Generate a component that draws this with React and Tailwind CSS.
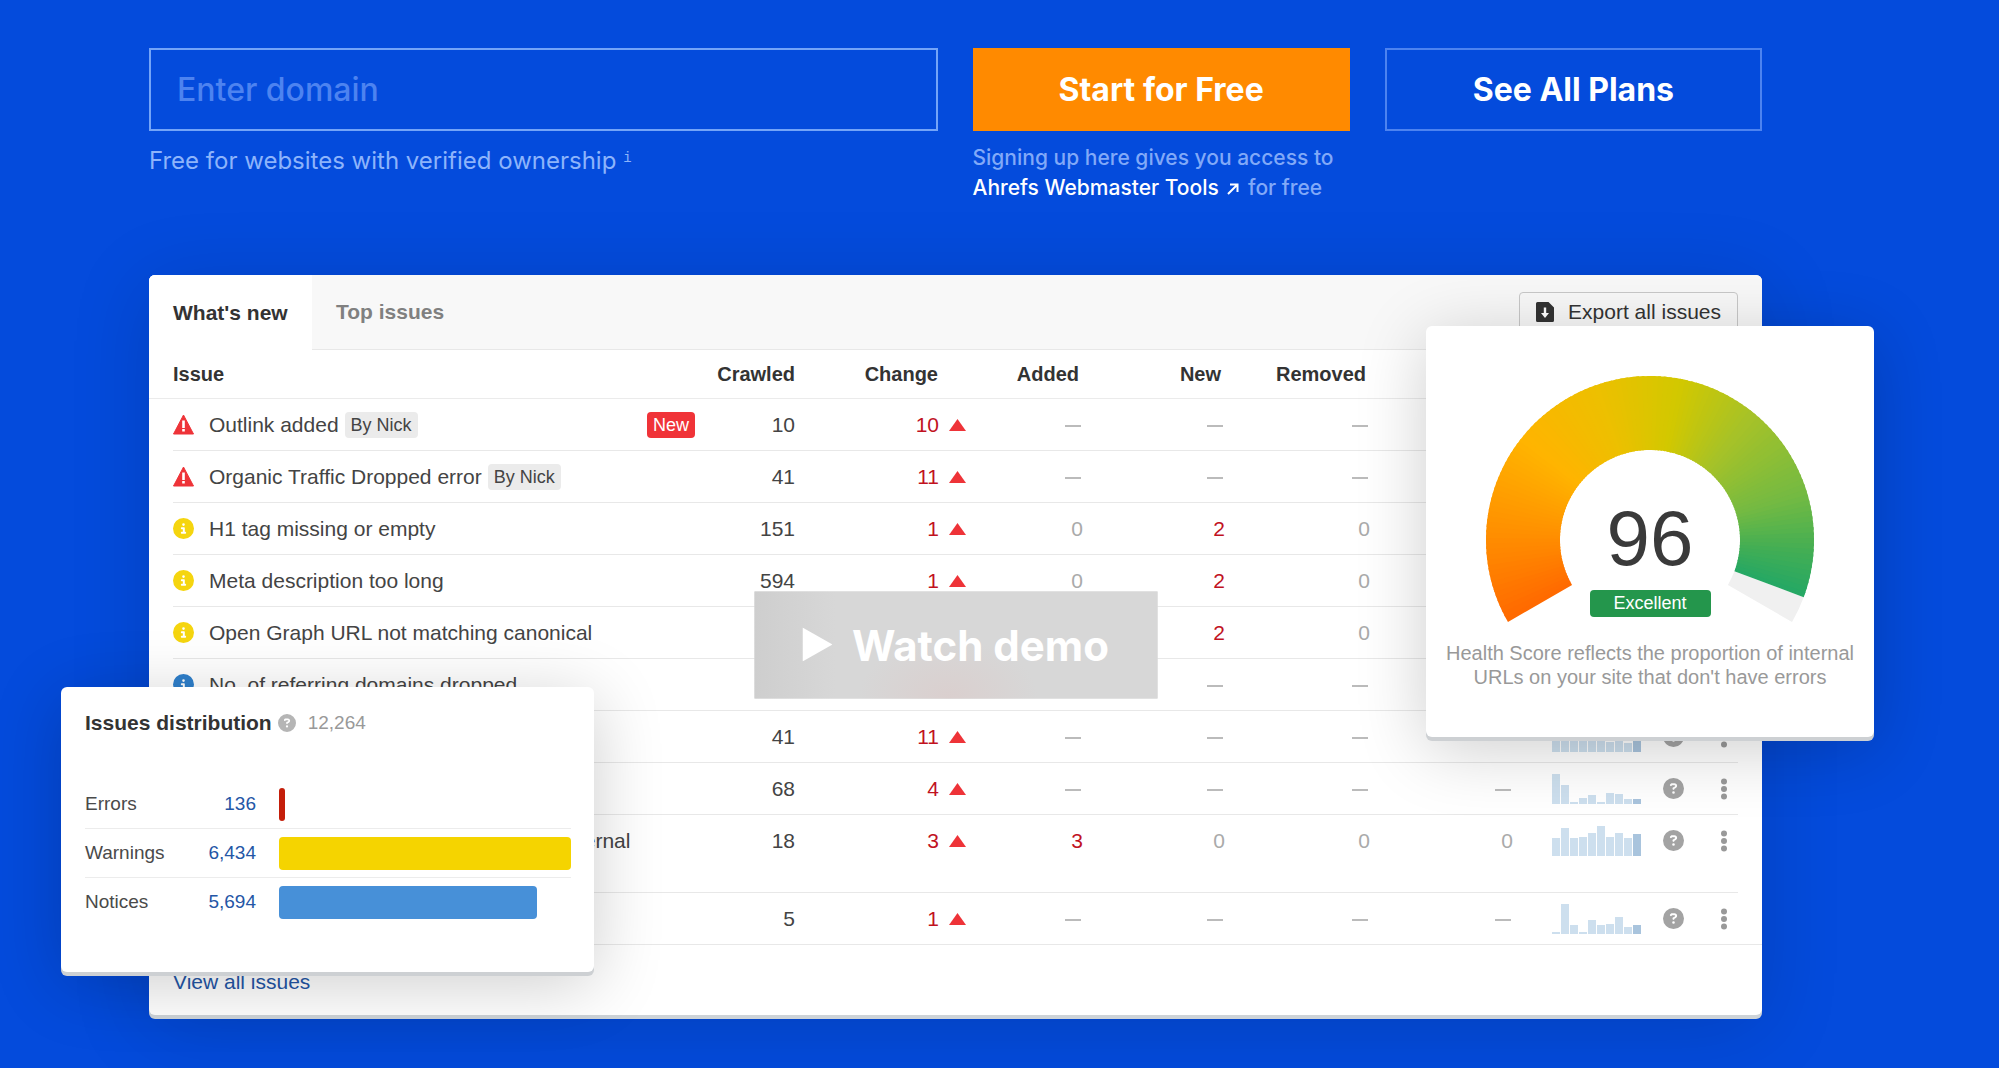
import React from "react";
import { FaCircleInfo, FaCircleQuestion } from "react-icons/fa6";

const issues = [
  { level: "error", name: "Outlink added", by: "By Nick", isNew: true, crawled: 10, change: 10 },
  { level: "error", name: "Organic Traffic Dropped error", by: "By Nick", crawled: 41, change: 11 },
  { level: "warning", name: "H1 tag missing or empty", crawled: 151, change: 1, added: 0, fresh: 2, removed: 0 },
  { level: "warning", name: "Meta description too long", crawled: 594, change: 1, added: 0, fresh: 2, removed: 0 },
  { level: "warning", name: "Open Graph URL not matching canonical", fresh: 2, removed: 0 },
  { level: "notice", name: "No. of referring domains dropped" },
  { level: "notice", crawled: 41, change: 11, history: [18, 12, 22, 18, 12, 20, 10, 12, 9, 18] },
  { level: "notice", crawled: 68, change: 4, history: [30, 19, 2, 6, 9, 2, 11, 10, 5, 5] },
  { level: "notice", name: "Page has only one dofollow incoming internal link", crawled: 18, change: 3, added: 3, fresh: 0, removed: 0, missing: 0, history: [18, 28, 18, 19, 23, 30, 19, 23, 18, 22] },
  { level: "notice", crawled: 5, change: 1, history: [2, 30, 9, 2, 14, 9, 10, 17, 7, 9] },
];

const distribution = [
  { label: "Errors", value: 136, color: "bg-[#c41e0a]" },
  { label: "Warnings", value: 6434, color: "bg-[#f5d400]" },
  { label: "Notices", value: 5694, color: "bg-[#4790d8]" },
];

const gaugeStops = [
  [0, [255, 106, 0]],
  [0.14, [255, 145, 0]],
  [0.28, [255, 180, 0]],
  [0.42, [236, 192, 0]],
  [0.54, [210, 200, 0]],
  [0.66, [166, 194, 40]],
  [0.8, [116, 186, 66]],
  [0.89, [66, 174, 84]],
  [0.96, [34, 167, 102]],
];

const gaugeColor = (t) => {
  let i = 1;
  while (i < gaugeStops.length - 1 && gaugeStops[i][0] < t) i++;
  const [t0, c0] = gaugeStops[i - 1];
  const [t1, c1] = gaugeStops[i];
  const k = Math.min(1, (t - t0) / (t1 - t0));
  return `rgb(${c0.map((c, n) => Math.round(c + (c1[n] - c) * k)).join(",")})`;
};

// Ring slice between two fractions of the 240 degree dial
const slice = (from, to) => {
  const point = (t, r) => {
    const a = ((150 + 240 * t) * Math.PI) / 180;
    return `${(164 + r * Math.cos(a)).toFixed(2)} ${(164 + r * Math.sin(a)).toFixed(2)}`;
  };
  return `M${point(from, 164)}A164 164 0 0 1 ${point(to, 164)}L${point(to, 90)}A90 90 0 0 0 ${point(from, 90)}Z`;
};

const Gauge = ({ score }) => {
  const steps = 120;
  const filled = score / 100;
  return (
    <svg viewBox="0 0 328 248" className="w-[328px] h-[248px]" aria-hidden="true">
      <path d={slice(filled, 1)} fill="#f0f0f0" />
      {Array.from({ length: steps }, (_, i) => {
        const from = (i / steps) * filled;
        const to = Math.min(filled, ((i + 1.5) / steps) * filled);
        return <path key={i} d={slice(from, to)} fill={gaugeColor(from)} />;
      })}
    </svg>
  );
};

const LevelIcon = ({ level }) => {
  if (level === "error") {
    return (
      <svg viewBox="0 0 21 21" className="w-[21px] h-[21px] shrink-0" aria-hidden="true">
        <path d="M10.5 1L20.5 20H0.5Z" fill="#ee3338" stroke="#ee3338" strokeLinejoin="round" />
        <path d="M9.2 6.5h2.6V14H9.2zM9.2 15h2.6v2.6H9.2z" fill="#fff" />
      </svg>
    );
  }
  return (
    <FaCircleInfo
      className={`w-[21px] h-[21px] shrink-0 ${level === "warning" ? "text-[#f5d50f]" : "text-[#2f80cc]"}`}
    />
  );
};

const Amount = ({ value }) => {
  if (value === undefined) return <span className="inline-block w-4 h-[2px] mr-[2px] mb-[5px] bg-[#bbb]" />;
  return <span className={value > 0 ? "text-[#c1121f]" : "text-[#aaa]"}>{value}</span>;
};

const History = ({ bars }) => (
  <div className="flex items-end gap-px h-[30px]">
    {bars.map((h, i) => (
      <div
        key={i}
        className={i === bars.length - 1 ? "w-2 bg-[#a9c4dd]" : "w-2 bg-[#cddfee]"}
        style={{ height: h }}
      />
    ))}
  </div>
);

const IssuesTable = () => (
  <table className="w-full table-fixed text-right">
    <colgroup>
      <col />
      <col className="w-[100px]" />
      <col className="w-[171px]" />
      <col className="w-[117px]" />
      <col className="w-[142px]" />
      <col className="w-[145px]" />
      <col className="w-[143px]" />
      <col className="w-[128px]" />
      <col className="w-[43px]" />
      <col className="w-[78px]" />
    </colgroup>
    <thead className="text-xl font-bold text-[#333]">
      <tr className="h-12 border-b border-[#ebebeb]">
        <th className="pl-6 text-left">Issue</th>
        <th>Crawled</th>
        <th className="pr-7">Change</th>
        <th className="pr-1">Added</th>
        <th className="pr-1">New</th>
        <th className="pr-1">Removed</th>
        <td colSpan={4} />
      </tr>
    </thead>
    <tbody className="text-[21px] leading-[26px] text-[#444]">
      {issues.map((issue, idx) => (
        <tr
          key={idx}
          className="bg-[linear-gradient(#e8e8e8,#e8e8e8)] bg-[length:calc(100%-48px)_1px] bg-bottom bg-no-repeat last:bg-[length:100%_1px] [&>td]:py-[13px] [&>td]:align-top"
        >
          <td className="pl-6 text-left">
            <div className="flex">
              <div className="flex items-center h-[26px] mr-[15px]">
                <LevelIcon level={issue.level} />
              </div>
              <span className="max-w-[430px]">{issue.name}</span>
              {issue.by && (
                <span className="ml-[6px] px-[6px] rounded-sm bg-[#ebebeb] text-lg leading-[26px]">{issue.by}</span>
              )}
              {issue.isNew && (
                <span className="ml-auto px-[6px] rounded bg-[#f03338] text-lg leading-[26px] text-white">New</span>
              )}
            </div>
          </td>
          <td>{issue.crawled}</td>
          <td>
            {issue.change && (
              <div className="flex items-center justify-end gap-[10px] text-[#c1121f]">
                {issue.change}
                <svg viewBox="0 0 17 12" className="w-[17px] h-3" aria-hidden="true">
                  <path d="M8.5 0L17 12H0Z" fill="#ee3338" />
                </svg>
              </div>
            )}
          </td>
          <td><Amount value={issue.added} /></td>
          <td><Amount value={issue.fresh} /></td>
          <td><Amount value={issue.removed} /></td>
          <td><Amount value={issue.missing} /></td>
          <td>
            {issue.history && (
              <div className="flex items-center justify-end h-[26px]">
                <History bars={issue.history} />
              </div>
            )}
          </td>
          <td>
            <div className="flex items-center justify-end h-[26px]">
              <FaCircleQuestion className="w-[21px] h-[21px] text-[#a3a3a3]" />
            </div>
          </td>
          <td className="pr-[35px]">
            <button type="button" aria-label="More" className="flex items-center justify-end w-full h-[26px]">
              <svg viewBox="0 0 6 22" className="w-[6px] h-[22px]" fill="#999" aria-hidden="true">
                <circle cx="3" cy="3.5" r="3" />
                <circle cx="3" cy="11" r="3" />
                <circle cx="3" cy="18.5" r="3" />
              </svg>
            </button>
          </td>
        </tr>
      ))}
    </tbody>
  </table>
);

const HealthCard = () => (
  <div className="absolute -right-[112px] top-[51px] flex flex-col items-center w-[448px] pt-[50px] pb-12 rounded-md bg-white shadow-[0_4px_0_#cdd0d3,0_12px_70px_rgba(0,0,0,0.2)]">
    <Gauge score={96} />
    <div className="-mt-[126px] text-[78px] leading-[80px] text-[#3a3a3a]">96</div>
    <div className="mt-[12px] w-[121px] rounded bg-[#24964c] text-center text-lg leading-[27px] text-white">
      Excellent
    </div>
    <p className="mt-6 w-[424px] text-center text-xl leading-6 text-[#999]">
      Health Score reflects the proportion of internal URLs on your site that don't have errors
    </p>
  </div>
);

const DistributionCard = () => {
  const max = Math.max(...distribution.map((d) => d.value));
  return (
    <div className="absolute -left-[88px] top-[412px] w-[533px] pl-6 pr-[23px] pt-6 pb-[45px] rounded-md bg-white text-[19px] text-[#4a4a4a] shadow-[0_4px_0_#cdd0d3,0_12px_70px_rgba(0,0,0,0.2)]">
      <div className="flex items-center h-6 mb-[45px]">
        <h3 className="text-[21px] font-bold text-[#333]">Issues distribution</h3>
        <FaCircleQuestion className="ml-[6px] w-[18px] h-[18px] text-[#b5b5b5]" />
        <span className="ml-3 text-[#999]">12,264</span>
      </div>
      {distribution.map((d) => (
        <div key={d.label} className="flex items-center h-[49px] border-b border-[#ececec] last:border-0">
          <span className="w-[86px]">{d.label}</span>
          <a href="#issues" className="w-[85px] text-right text-[#2456a6]">
            {d.value.toLocaleString("en-US")}
          </a>
          <div className="flex-1 ml-[23px]">
            <div className={`h-[33px] rounded ${d.color}`} style={{ width: `${(d.value / max) * 100}%` }} />
          </div>
        </div>
      ))}
    </div>
  );
};

export default function App() {
  return (
    <div className="min-h-screen bg-[#044bdc] pl-[149px] pr-[237px] pt-12 pb-12 font-['Liberation_Sans',Arial,sans-serif] overflow-hidden">
      <form
        className="grid grid-cols-[788fr_377fr_377fr] gap-[35px] font-['Inter',sans-serif]"
        onSubmit={(e) => e.preventDefault()}
      >
        <div>
          <input
            type="text"
            aria-label="Domain"
            placeholder="Enter domain"
            className="block w-full h-[83px] px-[26px] border-2 border-[#74a4f8] bg-transparent text-[32px] font-medium text-white placeholder:text-[#4d83f0] outline-none"
          />
          <p className="mt-3 text-2xl leading-9 text-[#8db4fb]">
            Free for websites with verified ownership{" "}
            <sup className="font-['Liberation_Mono',monospace] text-sm leading-none">i</sup>
          </p>
        </div>
        <div>
          <button type="submit" className="block w-full h-[83px] bg-[#ff8a00] text-[32px] font-bold text-white">
            Start for Free
          </button>
          <p className="mt-3 text-[21px] leading-[30px] font-medium text-[#81a9f8]">
            Signing up here gives you access to
            <br />
            <a href="#tools" className="text-white">
              Ahrefs Webmaster Tools{" "}
              <svg viewBox="0 0 12 12" className="inline w-3 h-3 mx-[3px]" fill="none" stroke="currentColor" strokeWidth="2" aria-hidden="true">
                <path d="M1 11L10.5 1.5M3 1.5h7.5V9" />
              </svg>
            </a>{" "}
            for free
          </p>
        </div>
        <div>
          <button type="button" className="block w-full h-[83px] border-2 border-[#4d83f0] text-[32px] font-bold text-white">
            See All Plans
          </button>
        </div>
      </form>

      <section className="relative mt-[72px] rounded-md bg-white shadow-[0_4px_0_#cdd3d8,0_12px_80px_rgba(0,0,0,0.15)]">
        <div className="flex items-center h-[75px] pr-6 rounded-t-md border-b border-[#e8e8e8] bg-[#f8f8f8] text-[21px]">
          <button type="button" className="w-[163px] h-[75px] mb-[-1px] pl-6 rounded-tl-md bg-white text-left font-bold text-[#333]">
            What's new
          </button>
          <button type="button" className="ml-6 font-bold text-[#808080]">Top issues</button>
          <button type="button" className="flex items-center h-10 ml-auto px-4 rounded-sm border border-[#c8c8c8] bg-[#f8f8f8] text-[#333]">
            <svg viewBox="0 0 18 20" className="w-[18px] h-5 mr-[14px]" aria-hidden="true">
              <path d="M1.5 0H12.5L18 5.5V18.5a1.5 1.5 0 0 1-1.5 1.5H1.5a1.5 1.5 0 0 1-1.5-1.5V1.5A1.5 1.5 0 0 1 1.5 0Z" fill="#333" />
              <path d="M7.8 5.5h2.4v5.5H13L9 16L5 11h2.8Z" fill="#fff" />
            </svg>
            Export all issues
          </button>
        </div>
        <IssuesTable />
        <div className="flex items-center h-[70px] px-6 pt-1 text-[21px]">
          <a href="#issues" className="text-[#2456a6]">View all issues</a>
        </div>

        <button
          type="button"
          className="absolute left-1/2 top-1/2 -translate-x-1/2 -translate-y-1/2 flex items-center justify-center gap-5 w-[403px] h-[107px] bg-[#d7d7d7] bg-[radial-gradient(ellipse_90px_60px_at_48%_100%,#dacfce,transparent),linear-gradient(to_right,#cecece,#d7d7d7_20%)] font-['Inter',sans-serif] text-[42px] font-bold text-white"
        >
          <svg viewBox="0 0 30 34" className="w-[30px] h-[34px]" fill="currentColor" aria-hidden="true">
            <path d="M0 0L30 17L0 34Z" />
          </svg>
          Watch demo
        </button>
        <HealthCard />
        <DistributionCard />
      </section>
    </div>
  );
}
